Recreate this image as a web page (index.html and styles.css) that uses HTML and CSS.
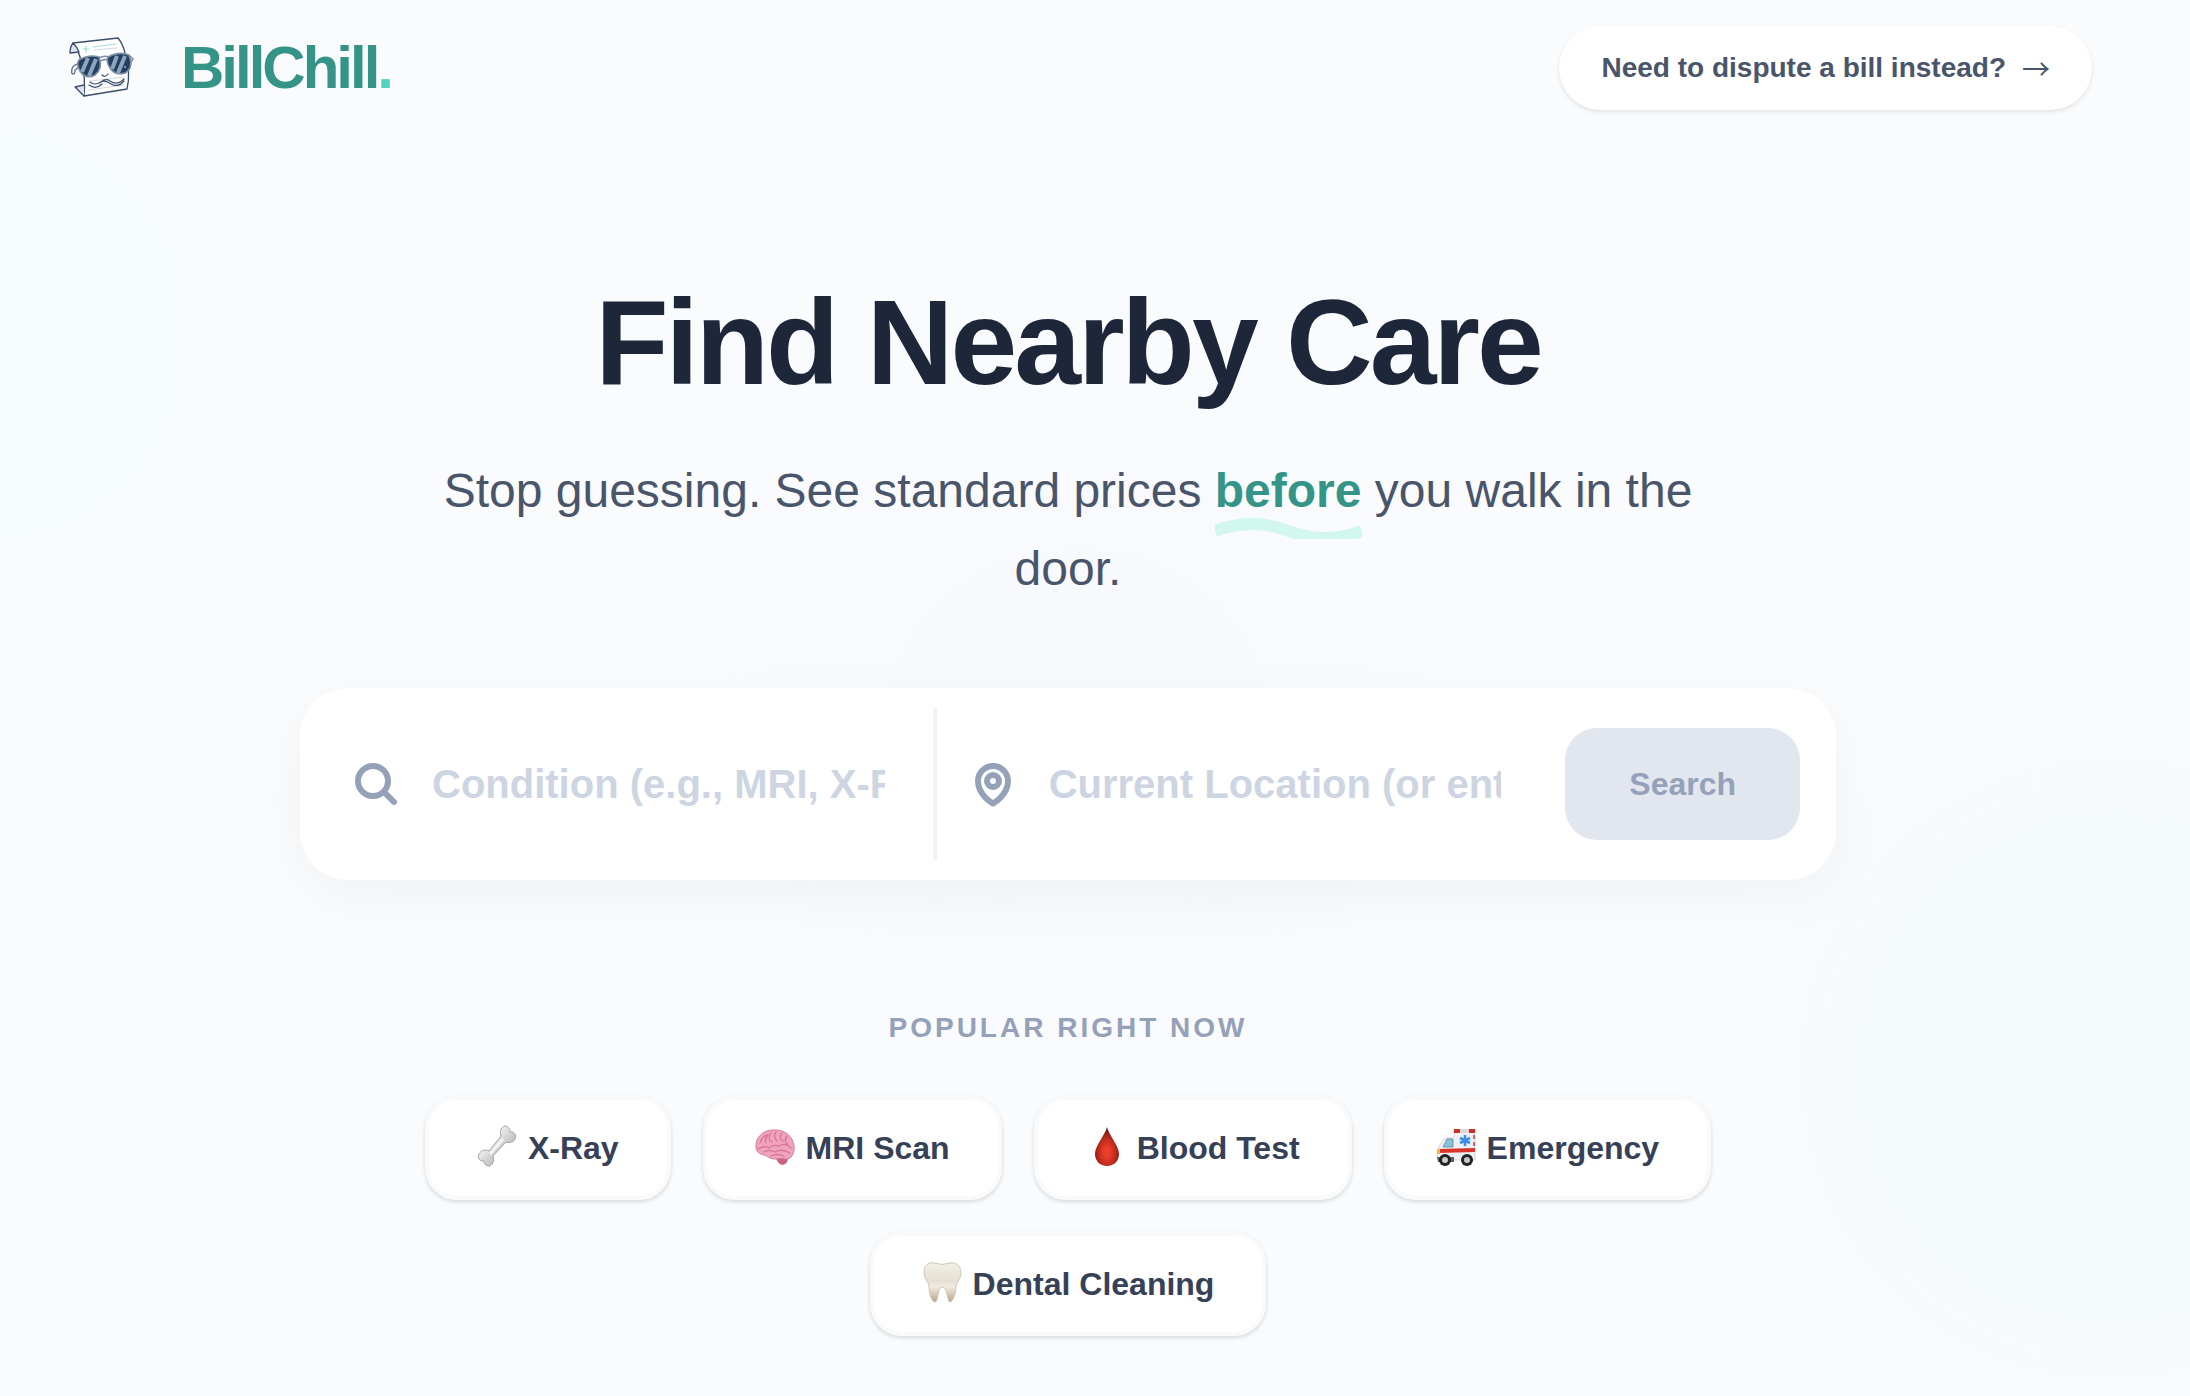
FILE: index.html
```html
<!DOCTYPE html>
<html lang="en">
<head>
    <meta charset="UTF-8">
    <title>BillChill - Find Nearby Care</title>
    <link rel="stylesheet" href="styles.css">
</head>
<body>
    <div class="backdrop">
        <div class="glow glow-teal"></div>
        <div class="glow glow-blue"></div>
        <div class="glow glow-indigo"></div>
    </div>

    <div class="page">
        <header class="header">
            <a href="#" class="brand">
                <svg class="brand-logo" viewBox="0 -3 80 80" fill="none" stroke="#3b4d6b" stroke-linejoin="round" stroke-linecap="round">
                    <!-- folded bill -->
                    <path d="M13 12 L58 7 Q63 13 65 22 Q71 42 67 58 L24 65 Q26 48 21 30 Q19 20 13 12z" fill="#fff" stroke-width="1.3"/>
                    <path d="M13 12 Q10 16 10 22 L19 21 Q17 16 13 12z" fill="#dbe5f1" stroke-width="1.3"/>
                    <path d="M24 65 L15 56 L24 54" fill="#dbe5f1" stroke-width="1.3"/>
                    <path d="M26 15v6M23 18h6" stroke="#9bdcd8" stroke-width="1.2"/>
                    <path d="M33 16 L56 13" stroke="#a3ddd6" stroke-width="1.2"/>
                    <path d="M34 19 L57 17M30 50 L64 46M29 59 L64 54" stroke="#d2d9e4" stroke-width="1"/>
                    <!-- sunglasses -->
                    <path d="M18 33 Q13 34 12 38 Q11 43 13 43 Q15 43 15 39 L19 36" fill="#fff" stroke="#64758c" stroke-width="1.4"/>
                    <path d="M39 27 Q44 24 49 26M39 31 Q44 27 49 29M70 25 L73 28 L71 31" stroke="#7d8fa3" stroke-width="1.6"/>
                    <path d="M19 29 Q29 23 39 26 Q43 38 35 44 Q26 49 20 40 Q16 33 19 29z" fill="#243f62" stroke="#7d8fa3" stroke-width="1.6"/>
                    <path d="M48 26 Q59 20 69 24 Q74 37 65 42 Q55 45 50 37 Q46 31 48 26z" fill="#243f62" stroke="#7d8fa3" stroke-width="1.6"/>
                    <path d="M28 27 L22 41M36 28 L29 45M57 25 L52 38M65 25 L58 42" stroke="#8ea6bb" stroke-width="4" stroke-linecap="butt"/>
                    <circle cx="65" cy="36" r="0.8" fill="#fff" stroke="none"/>
                    <!-- smile and moustache -->
                    <path d="M42 44 Q45 47 48 43" stroke-width="1.2"/>
                    <path d="M30 51 Q35 55 41 51 Q46 47 50 50 Q57 55 64 48M29 54 Q36 59 42 53M39 52 Q44 48 51 53 Q58 57 64 50" stroke-width="1.2"/>
                </svg>
                <span class="brand-name">BillChill<span class="brand-dot">.</span></span>
            </a>
            <a href="#" class="dispute-link">
                <span>Need to dispute a bill instead?</span>
                <span class="dispute-arrow">→</span>
            </a>
        </header>

        <main class="hero">
            <h1 class="hero-title">Find Nearby Care</h1>
            <p class="hero-subtitle">
                Stop guessing. See standard prices
                <span class="highlight">before<svg class="squiggle" viewBox="0 0 148 24" preserveAspectRatio="none" fill="none"><path d="M0 16 Q37 2 74 16 T148 16" stroke="#d1f7ef" stroke-width="12"/></svg></span>
                you walk in the door.
            </p>

            <form class="search-card">
                <div class="search-field">
                    <svg class="field-icon" viewBox="0 0 24 24" aria-hidden="true">
                        <path d="M21 21l-5.197-5.197m0 0A7.5 7.5 0 105.196 5.196a7.5 7.5 0 0010.607 10.607z"/>
                    </svg>
                    <input type="text" class="field-input" aria-label="Condition" placeholder="Condition (e.g., MRI, X-Ray)">
                </div>
                <div class="divider"></div>
                <div class="search-field">
                    <svg class="field-icon" viewBox="0 0 24 24" aria-hidden="true">
                        <path d="M15 10.5a3 3 0 11-6 0 3 3 0 016 0z"/>
                        <path d="M19.5 10.5c0 7.142-7.5 11.25-7.5 11.25S4.5 17.642 4.5 10.5a7.5 7.5 0 1115 0z"/>
                    </svg>
                    <input type="text" class="field-input" aria-label="Location" placeholder="Current Location (or enter zip)">
                </div>
                <button type="submit" class="search-button" disabled>Search</button>
            </form>

            <section class="popular">
                <h2 class="popular-title">Popular right now</h2>
                <div class="chips">
                    <button type="button" class="chip">
                        <svg class="chip-icon" viewBox="0 2 40 40">
                            <defs>
                                <linearGradient id="bone" x1="0" y1="0" x2="1" y2="1">
                                    <stop offset="0.3" stop-color="#f4f4f4"/>
                                    <stop offset="0.7" stop-color="#b9bbbd"/>
                                </linearGradient>
                            </defs>
                            <path d="M24 10 C22 5 25 0 28 0 C31 0 33 3 33 6 C37 5 40 9 38 13 C36 17 31 17 29 16 L16 30 C18 35 15 40 12 40 C9 40 7 38 7 35 C3 36 0 32 2 28 C4 24 9 23 12 25z" fill="url(#bone)" stroke="#a3a5a8" stroke-width="1"/>
                            <path d="M26 13 L13 28" stroke="#fff" stroke-width="3" fill="none" opacity="0.7"/>
                        </svg>
                        X-Ray
                    </button>
                    <button type="button" class="chip">
                        <svg class="chip-icon" viewBox="0 2 40 40">
                            <path d="M20 30 Q23 39 28 39 Q34 37 33 30z" fill="#c8657e"/>
                            <path d="M1 21 C0 12 8 4 18 4 C29 3 38 10 39 20 C40 27 36 34 30 33 C26 32 24 33 20 33 C14 33 13 30 9 29 C4 28 1 25 1 21z" fill="#f0a3bd" stroke="#d5799a" stroke-width="1"/>
                            <path d="M5 17 Q8 9 13 9 Q9 14 11 17M16 7 Q12 14 17 16M21 6 Q18 11 22 15M27 7 Q23 12 28 15M32 10 Q28 15 33 19M3 23 Q9 19 14 22 Q18 18 24 20 Q30 16 36 22M9 26 Q15 23 20 26 Q27 22 35 27M16 30 Q22 27 29 30" fill="none" stroke="#d9759a" stroke-width="1.3" stroke-linecap="round"/>
                        </svg>
                        MRI Scan
                    </button>
                    <button type="button" class="chip">
                        <svg class="chip-icon" viewBox="0 2 40 40">
                            <defs>
                                <radialGradient id="blood" cx="0.5" cy="0.65" r="0.6">
                                    <stop offset="0.2" stop-color="#ea3e2c"/>
                                    <stop offset="0.6" stop-color="#bd2a1c"/>
                                    <stop offset="1" stop-color="#6f1811"/>
                                </radialGradient>
                            </defs>
                            <path d="M21 1 C23 9 33 20 33 28 C33 35 28 40 21 40 C14 40 9 35 9 28 C9 20 19 9 21 1z" fill="url(#blood)"/>
                        </svg>
                        Blood Test
                    </button>
                    <button type="button" class="chip">
                        <svg class="chip-icon" viewBox="0 2 40 40">
                            <path d="M18 5 H39 V34 H3 Q1 34 1 29 L2 22 L7 14 Q8 12 11 12 L18 11z" fill="#eef0f3" stroke="#c5c9cf" stroke-width="0.7"/>
                            <path d="M18 3 h6 v4 h-6zM33 3 h6 v4 h-6z" fill="#d22d24"/>
                            <path d="M24 3 h9 v4 h-9z" fill="#d7d9dd"/>
                            <path d="M7 21 L11 13 H17 V21z" fill="#85c3da" stroke="#567a8a" stroke-width="0.7"/>
                            <path d="M2 23 L39 22 V26 L2 27z" fill="#d9352b"/>
                            <path d="M38 9v4M38 16v4" stroke="#d9352b" stroke-width="1.5"/>
                            <path d="M29 9v11M24 12l10 5M34 12l-10 5" stroke="#3c8ee8" stroke-width="2.6"/>
                            <path d="M1 23 h3 v5 h-3z" fill="#f4b942"/>
                            <path d="M1 31 H18 V36 H2z" fill="#5b6066"/>
                            <circle cx="9" cy="34" r="6" fill="#222"/>
                            <circle cx="9" cy="34" r="3" fill="#c7cacd"/>
                            <circle cx="31" cy="34" r="6" fill="#222"/>
                            <circle cx="31" cy="34" r="3" fill="#c7cacd"/>
                        </svg>
                        Emergency
                    </button>
                    <button type="button" class="chip">
                        <svg class="chip-icon" viewBox="0 2 40 40">
                            <defs>
                                <linearGradient id="tooth" x1="0" y1="0" x2="0" y2="1">
                                    <stop offset="0" stop-color="#f3f0e6"/>
                                    <stop offset="0.45" stop-color="#e5e0d3"/>
                                    <stop offset="0.6" stop-color="#f0ece2"/>
                                    <stop offset="1" stop-color="#b9a68c"/>
                                </linearGradient>
                            </defs>
                            <path d="M2 10 C2 3 7 0 12 1 Q20 4 28 1 C34 0 39 4 39 11 C39 17 35 19 34 24 C34 31 31 40 28 40 C25 40 26 25 20 25 C15 25 17 40 13 40 C9 40 7 30 7 24 C6 19 2 17 2 10z" fill="url(#tooth)" stroke="#cfc6b5" stroke-width="1"/>
                        </svg>
                        Dental Cleaning
                    </button>
                </div>
            </section>
        </main>
    </div>
</body>
</html>
```

FILE: styles.css
```css
* {
    box-sizing: border-box;
}

body {
    position: relative;
    margin: 0;
    min-height: 100vh;
    background: #fafbfd;
    color: #1e2639;
    font-family: "Liberation Sans", Arial, sans-serif;
}

/* soft coloured blobs behind the content */
.backdrop {
    position: absolute;
    inset: 0;
    overflow: hidden;
}

.glow {
    position: absolute;
    border-radius: 50%;
}

.glow-teal {
    left: -340px;
    top: 15px;
    width: 640px;
    height: 640px;
    background: radial-gradient(closest-side, #f6fbfb 60%, transparent);
}

.glow-blue {
    right: -320px;
    bottom: -74px;
    width: 800px;
    height: 800px;
    background: radial-gradient(closest-side, #f5fafd 60%, transparent);
}

.glow-indigo {
    left: 30%;
    top: 340px;
    width: 840px;
    height: 760px;
    background: radial-gradient(closest-side, #f8f9fd 30%, transparent);
}

.page {
    position: relative;
    padding-right: 54px;
}

.header {
    display: flex;
    justify-content: space-between;
    align-items: center;
    padding: 26px 44px 26px 60px;
}

.brand {
    display: flex;
    align-items: center;
    gap: 41px;
    text-decoration: none;
}

.brand-logo {
    width: 80px;
    height: 80px;
}

.brand-name {
    color: #349488;
    font-size: 60px;
    font-weight: bold;
    line-height: 72px;
    letter-spacing: -3px;
}

.brand-dot {
    color: #56d3be;
}

.dispute-link {
    display: flex;
    align-items: center;
    gap: 16px;
    padding: 20px 40px;
    border: 2px solid #fff;
    border-radius: 42px;
    background: #fff;
    box-shadow: 0 2px 4px rgba(0, 0, 0, 0.1);
    color: #49556b;
    font-size: 28px;
    font-weight: bold;
    line-height: 40px;
    text-decoration: none;
}

.dispute-arrow {
    font-family: "Noto Sans CJK JP", sans-serif;
    font-weight: normal;
}

.hero {
    display: flex;
    flex-direction: column;
    align-items: center;
    max-width: 1536px;
    margin: 0 auto;
    padding-top: 146px;
    text-align: center;
}

.hero-title {
    margin: 0 0 50px;
    font-size: 120px;
    line-height: 120px;
    letter-spacing: -3px;
}

.hero-subtitle {
    max-width: 1344px;
    margin: 0 0 80px;
    color: #49556b;
    font-size: 48px;
    line-height: 78px;
}

.highlight {
    position: relative;
    color: #349488;
    font-weight: bold;
}

.squiggle {
    position: absolute;
    left: 0;
    bottom: -22px;
    width: 100%;
    height: 24px;
}

.search-card {
    display: flex;
    align-items: center;
    width: 100%;
    margin-bottom: 128px;
    padding: 20px;
    border-radius: 48px;
    background: #fff;
    box-shadow: 0 16px 60px rgba(0, 0, 0, 0.04);
}

.search-field {
    display: flex;
    flex: 1;
    align-items: center;
    min-width: 0;
    padding: 48px 32px;
}

.field-icon {
    flex-shrink: 0;
    width: 48px;
    height: 48px;
    margin-right: 16px;
    fill: none;
    stroke: #94a1b9;
    stroke-width: 3;
    stroke-linecap: round;
    stroke-linejoin: round;
}

.field-input {
    width: 100%;
    min-width: 0;
    height: 56px;
    padding: 0 16px;
    border: none;
    outline: none;
    background: transparent;
    color: #364157;
    font-family: inherit;
    font-size: 40px;
    font-weight: bold;
}

.field-input::placeholder {
    color: #cdd5e2;
}

.divider {
    align-self: stretch;
    width: 4px;
    background: #f1f5fa;
}

.search-button {
    margin: 0 16px;
    padding: 32px 64px;
    border: none;
    border-radius: 32px;
    background: #e2e7ef;
    color: #94a1b9;
    font-family: inherit;
    font-size: 32px;
    font-weight: bold;
    line-height: 48px;
}

.popular-title {
    margin: 0 0 48px;
    color: #94a1b9;
    font-size: 28px;
    line-height: 40px;
    letter-spacing: 3px;
    text-transform: uppercase;
}

.chips {
    display: flex;
    flex-wrap: wrap;
    justify-content: center;
    gap: 32px;
}

.chip {
    display: flex;
    align-items: center;
    gap: 11px;
    padding: 24px 48px;
    border: 4px solid #f8fafc;
    border-radius: 32px;
    background: #fff;
    box-shadow: 0 2px 4px rgba(0, 0, 0, 0.14);
    color: #364157;
    font-family: inherit;
    font-size: 32px;
    font-weight: bold;
    line-height: 48px;
    cursor: pointer;
}

.chip-icon {
    width: 40px;
    height: 40px;
    overflow: visible;
}
```
